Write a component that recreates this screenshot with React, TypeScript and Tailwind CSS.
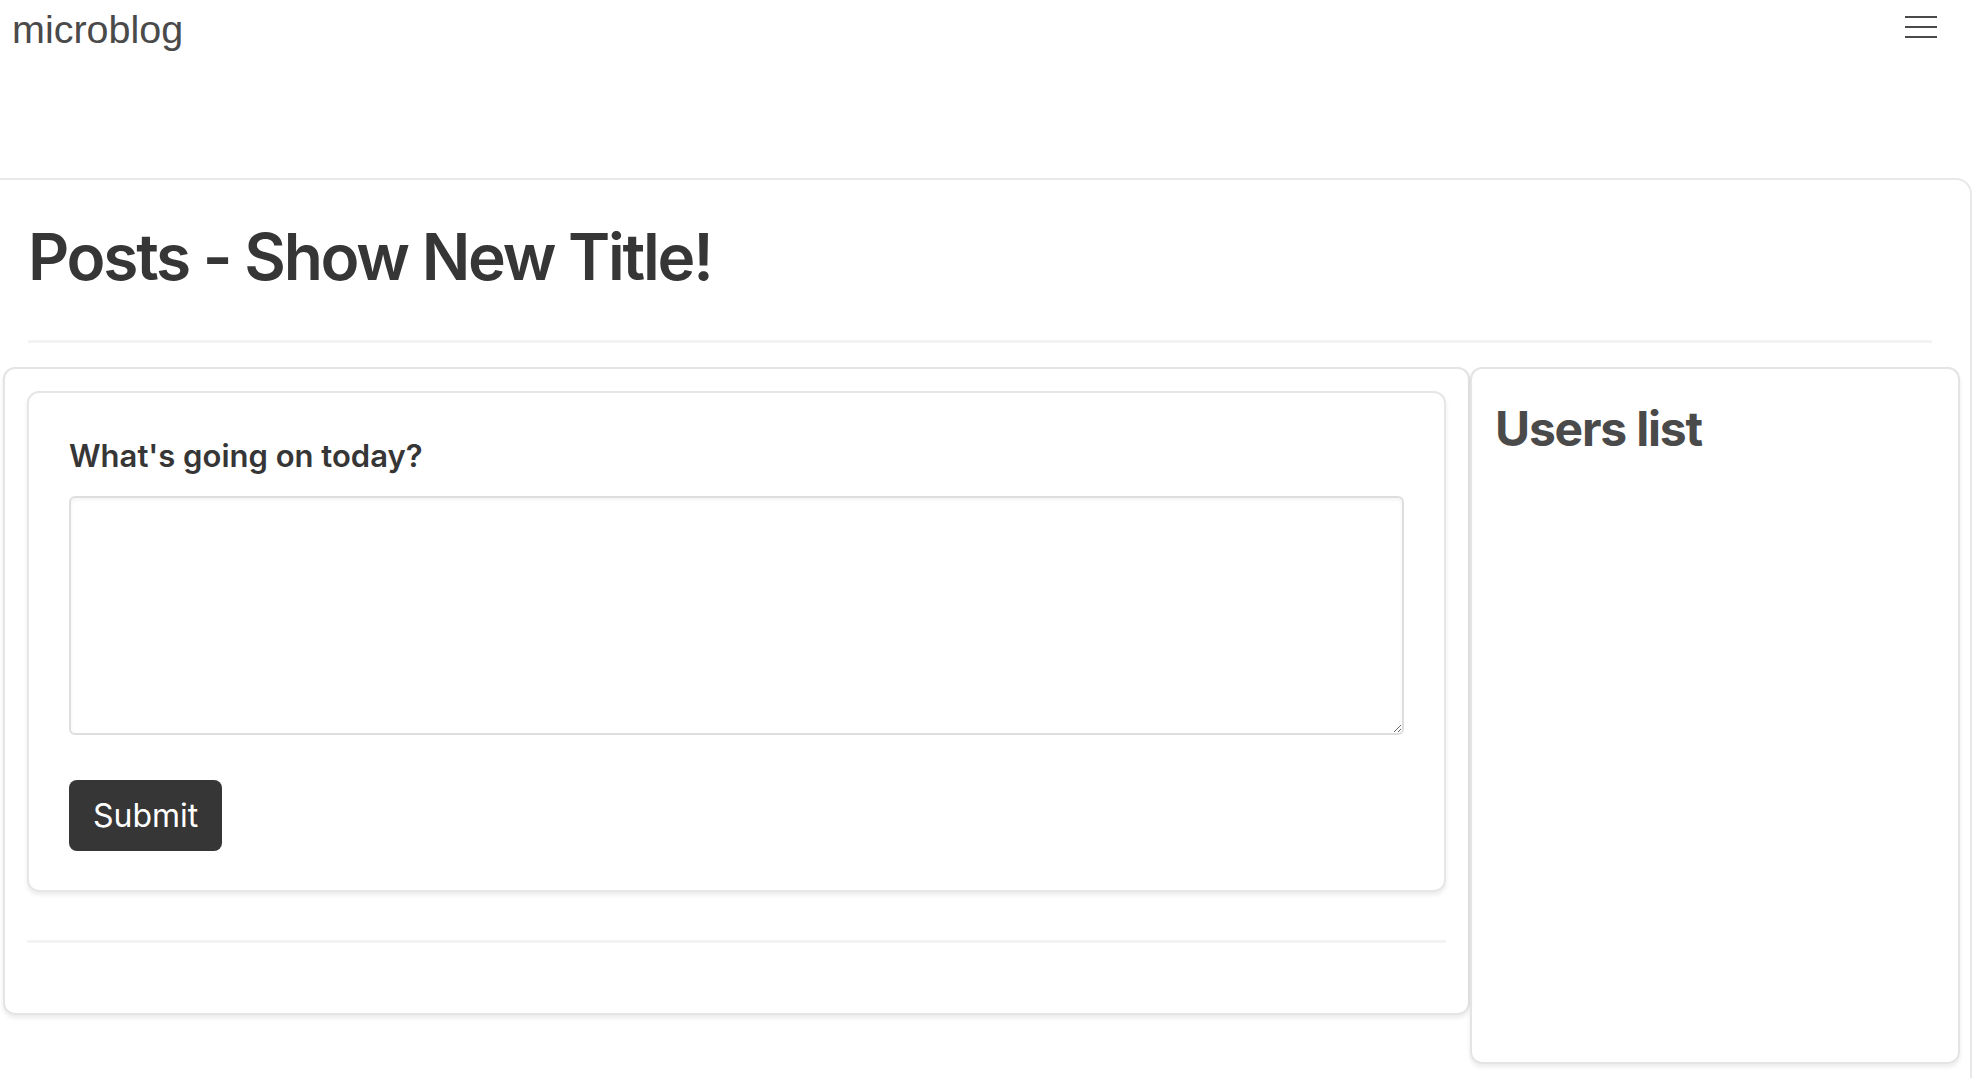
import React from "react";

const Navbar = () => (
  <header className="h-[178px] flex items-start justify-between">
    <a
      href="#"
      className="pl-[12px] pt-[5px] text-[39.5px] leading-[48px] text-[#4a4a4a] font-['Liberation_Sans',Arial,sans-serif]"
    >
      microblog
    </a>
    <button aria-label="menu" className="mr-[35px] mt-[16px] w-[32px] flex flex-col gap-[8px]">
      {[0, 1, 2].map((i) => (
        <span key={i} className="block h-[2px] w-[32px] bg-[#4a4a4a]"></span>
      ))}
    </button>
  </header>
);

const PostForm = () => (
  <div className="rounded-[12px] border-2 border-[#e6e6e6] shadow-[0_3px_4px_rgba(10,10,10,0.08)] px-[40px] pt-[39px] pb-[39px]">
    <label className="block text-[31px] leading-[48px] font-semibold text-[#363636] mb-[16px]">
      What's going on today?
    </label>
    <textarea className="block w-full h-[239px] rounded-[6px] border-2 border-[#dedede] shadow-[inset_0_2px_4px_rgba(10,10,10,0.05)] outline-none p-3 text-[32px]"></textarea>
    <button className="mt-[45px] h-[71px] px-[24px] rounded-[8px] bg-[#363636] text-white text-[32px] leading-none">
      Submit
    </button>
  </div>
);

export default function App() {
  return (
    <div className="min-h-screen bg-white font-['Inter',sans-serif] overflow-hidden">
      <Navbar />
      <main className="border-t-2 border-r-2 border-[#e8e8e8] rounded-tr-[16px] min-h-[900px]">
        <div className="pl-[28px] pr-[38px] pt-[41px]">
          <h1 className="text-[64px] leading-[72px] font-semibold tracking-[-0.035em] text-[#363636]">
            Posts - Show New Title!
          </h1>
          <hr className="mt-[47px] h-[3px] border-0 bg-[#f3f3f3]" />
        </div>
        <div className="flex items-start pl-[3px] pr-[10px] mt-[24px]">
          <section className="flex-1 rounded-[12px] border-2 border-[#e4e4e4] shadow-[0_3px_4px_rgba(10,10,10,0.08)] p-[22px]">
            <PostForm />
            <hr className="my-[48px] h-[3px] border-0 bg-[#f3f3f3]" />
          </section>
          <aside className="w-[490px] h-[697px] rounded-[12px] border-2 border-[#e4e4e4] shadow-[0_3px_4px_rgba(10,10,10,0.08)] px-[23px] pt-[33px]">
            <h2 className="text-[48px] leading-[54px] font-bold tracking-tight text-[#4a4a4a]">
              Users list
            </h2>
          </aside>
        </div>
      </main>
    </div>
  );
}
